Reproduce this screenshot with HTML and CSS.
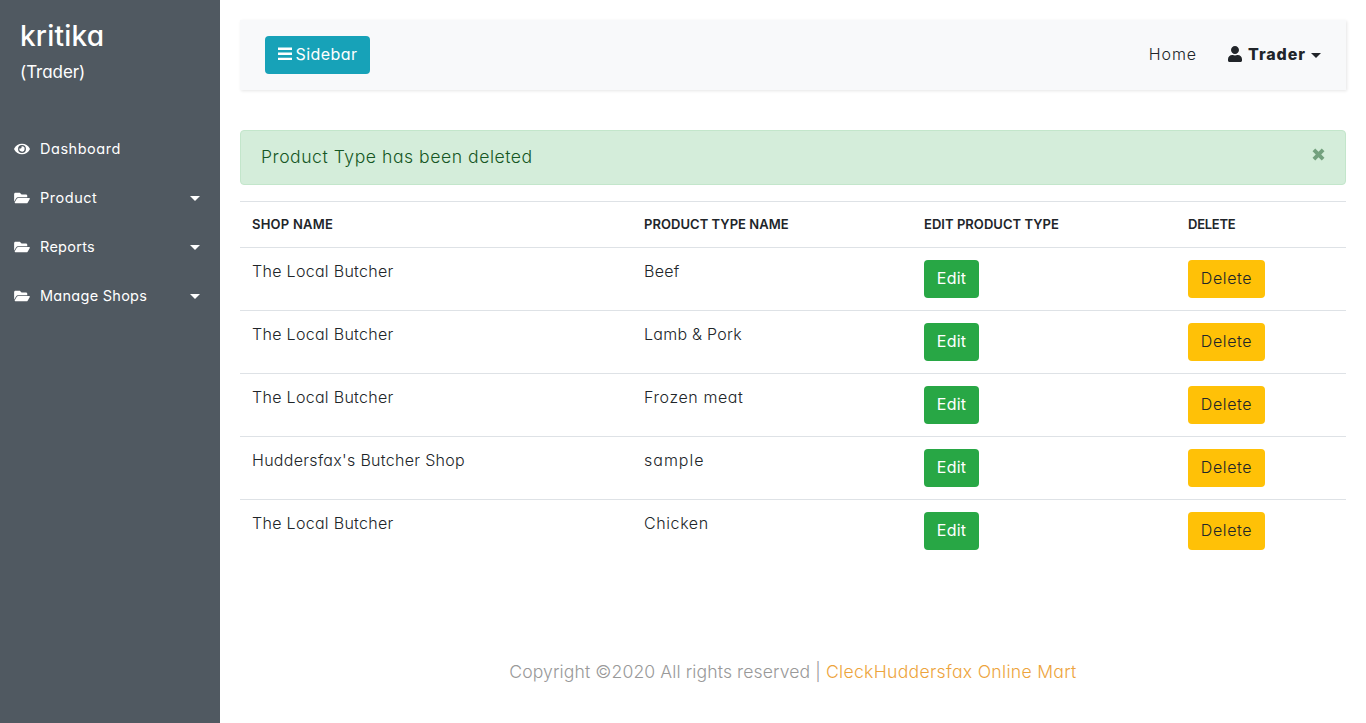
FILE: index.html
```
<!DOCTYPE html>
<html lang="en">
<head>
<meta charset="utf-8">
<title>Product Types</title>
<link rel="stylesheet" href="styles.css">
</head>
<body>
<svg width="0" height="0" class="sprite" aria-hidden="true">
  <symbol id="folder" viewBox="0 0 576 512"><path d="M572.694 292.093L500.27 416.248A63.997 63.997 0 0 1 444.989 448H45.025c-18.523 0-30.064-20.093-20.731-36.093l72.424-124.155A64 64 0 0 1 152 256h399.964c18.523 0 30.064 20.093 20.73 36.093zM152 224h328v-48c0-26.51-21.49-48-48-48H272l-64-64H48C21.49 64 0 85.49 0 112v278.046l69.077-118.418C86.214 242.25 117.989 224 152 224z"/></symbol>
  <symbol id="eye" viewBox="0 0 576 512"><path d="M572.52 241.4C518.29 135.59 410.93 64 288 64S57.68 135.64 3.48 241.41a32.35 32.35 0 0 0 0 29.19C57.71 376.41 165.07 448 288 448s230.32-71.64 284.52-177.41a32.35 32.35 0 0 0 0-29.19zM288 400a144 144 0 1 1 144-144 143.93 143.93 0 0 1-144 144zm0-240a95.31 95.31 0 0 0-25.31 3.79 47.85 47.85 0 0 1-66.9 66.9A95.78 95.78 0 1 0 288 160z"/></symbol>
</svg>
<div class="wrapper">
  <nav class="sidebar">
    <header class="sidebar-header">
      <h3 class="user-name">kritika</h3>
      <p class="user-role">(Trader)</p>
    </header>
    <ul class="menu">
      <li class="menu-item spaced"><svg class="menu-icon"><use href="#eye"/></svg>Dashboard</li>
      <li class="menu-item spaced"><svg class="menu-icon"><use href="#folder"/></svg>Product<i class="caret"></i></li>
      <li class="menu-item"><svg class="menu-icon"><use href="#folder"/></svg>Reports<i class="caret"></i></li>
      <li class="menu-item"><svg class="menu-icon"><use href="#folder"/></svg>Manage Shops<i class="caret"></i></li>
    </ul>
  </nav>
  <main class="content">
    <div class="navbar">
      <button class="btn btn-info"><svg class="bars" viewBox="0 0 14 14"><path d="M0 .5h14v2.400H0zM0 5.600h14v2.400H0zM0 10.700h14v2.400H0z"/></svg>Sidebar</button>
      <div class="nav-links">
        <a class="home">Home</a>
        <a class="account"><svg class="user-icon" viewBox="0 0 448 512"><path d="M224 256c70.700 0 128-57.300 128-128S294.700 0 224 0 96 57.300 96 128s57.300 128 128 128zm89.600 32h-16.700c-22.200 10.200-46.900 16-72.900 16s-50.600-5.800-72.900-16h-16.700C60.200 288 0 348.200 0 422.400V464c0 26.500 21.500 48 48 48h352c26.500 0 48-21.500 48-48v-41.600c0-74.200-60.200-134.400-134.400-134.400z"/></svg><b class="account-name">Trader</b><i class="caret"></i></a>
      </div>
    </div>
    <div class="alert"><span class="alert-text">Product Type has been deleted</span>
      <svg class="close" viewBox="0 0 12 12"><path d="M3 .5 6 3.500 9 .5 11.500 3 8.500 6l3 3L9 11.500l-3-3-3 3L.5 9l3-3-3-3z"/></svg></div>
    <table class="table">
      <thead><tr><th class="c1">SHOP NAME</th><th class="c2">PRODUCT TYPE NAME</th><th class="c3">EDIT PRODUCT TYPE</th><th>DELETE</th></tr></thead>
      <tbody>
        <tr><td>The Local Butcher</td><td>Beef</td><td><button class="btn btn-edit">Edit</button></td><td><button class="btn btn-delete">Delete</button></td></tr>
        <tr><td>The Local Butcher</td><td>Lamb &amp; Pork</td><td><button class="btn btn-edit">Edit</button></td><td><button class="btn btn-delete">Delete</button></td></tr>
        <tr><td>The Local Butcher</td><td class="spaced">Frozen meat</td><td><button class="btn btn-edit">Edit</button></td><td><button class="btn btn-delete">Delete</button></td></tr>
        <tr><td>Huddersfax's Butcher Shop</td><td class="wide">sample</td><td><button class="btn btn-edit">Edit</button></td><td><button class="btn btn-delete">Delete</button></td></tr>
        <tr><td>The Local Butcher</td><td class="spaced">Chicken</td><td><button class="btn btn-edit">Edit</button></td><td><button class="btn btn-delete">Delete</button></td></tr>
      </tbody>
    </table>
    <footer class="footer">Copyright ©2020 All rights reserved | <a class="footer-link">CleckHuddersfax Online Mart</a></footer>
  </main>
</div>
</body>
</html>
```
FILE: styles.css
```
* { box-sizing: border-box; }
body {
  margin: 0;
  font-family: Inter, "Open Sans", sans-serif;
  font-feature-settings: "cv11" 1;
  font-size: 16px;
  font-weight: 300;
  line-height: 24px;
  color: #212529;
  background: #fff;
}
.sprite { position: absolute; }
.wrapper { display: flex; height: 723px; overflow: hidden; }
.sidebar { width: 220px; flex: none; background: #505961; color: #fff; font-weight: 400; }
.sidebar-header { padding: 20px; height: 124px; }
.user-name { margin: 0 0 8px; font-size: 28px; font-weight: 500; line-height: 32px; letter-spacing: .2px; }
.user-role { margin: 0; font-size: 17px; line-height: 24px; letter-spacing: -.05px; }
.menu { list-style: none; margin: 0; padding: 0; }
.menu-item { display: flex; align-items: center; height: 49px; padding: 0 20px 0 14px; font-size: 14.5px; letter-spacing: .27px; }
.menu-item.spaced { letter-spacing: .52px; }
.menu-icon { width: 16px; height: 14px; margin-right: 10px; fill: #fff; }
.caret { margin-left: auto; border: 5px solid transparent; border-top-color: currentColor; border-bottom: 0; }
.menu .caret { margin-top: 2px; }
.content { flex: 1; padding: 20px; }
.navbar { display: flex; align-items: center; justify-content: space-between; height: 70px; padding: 0 25px; margin-bottom: 40px; background: #f8f9fa; box-shadow: 1px 1px 3px rgba(0, 0, 0, .1); }
.btn { height: 38px; border: 0; border-radius: 4px; padding: 0 0 2px; font: inherit; font-feature-settings: inherit; display: flex; align-items: center; justify-content: center; }
.btn-info { width: 105px; background: #17a2b8; color: #fff; font-weight: 400; gap: 4px; letter-spacing: .42px; }
.bars { width: 14px; height: 14px; fill: currentColor; }
.btn-edit { width: 55px; background: #28a745; color: #fff; font-weight: 400; letter-spacing: .2px; }
.btn-delete { width: 77px; background: #ffc107; color: #212529; letter-spacing: .6px; }
.nav-links { display: flex; align-items: center; gap: 31px; }
.home { letter-spacing: .9px; margin-bottom: 2px; }
.account { display: flex; align-items: center; }
.user-icon { width: 14px; height: 16px; fill: currentColor; margin: 0 6px 2px 0; }
.account-name { font-size: 16px; font-weight: 800; font-feature-settings: normal; letter-spacing: .95px; margin-bottom: 2px; }
.account .caret { margin-left: 5px; }
.alert { display: flex; justify-content: space-between; height: 55px; padding: 0 20px 2px; border: 1px solid #c3e6cb; border-radius: 4px; background: #d4edda; color: #155724; margin-bottom: 16px; align-items: center; }
.alert-text { font-size: 17.6px; letter-spacing: .53px; }
.close { width: 13px; height: 13px; margin-bottom: 5px; fill: #155724; opacity: .5; }
.table { width: 100%; table-layout: fixed; border-collapse: separate; border-spacing: 0; }
.table th, .table td { padding: 12px; border-top: 1px solid #dee2e6; text-align: left; vertical-align: top; }
.table th { height: 46px; padding: 10px 12px; font-size: 13px; font-weight: 600; letter-spacing: .04px; }
.table th:first-child { letter-spacing: .22px; }
.table th:last-child { letter-spacing: -.25px; }
.table td { height: 63px; line-height: 22px; letter-spacing: .26px; }
.table td:first-child { letter-spacing: .3px; }
.table td.spaced { letter-spacing: .6px; }
.table td.wide { letter-spacing: 1px; }
.c1 { width: 392px; }
.c2 { width: 280px; }
.c3 { width: 264px; }
.footer { margin-top: 98px; text-align: center; font-size: 17.6px; letter-spacing: .1px; color: #999; }
.footer-link { color: #eda43c; letter-spacing: .3px; }
```
